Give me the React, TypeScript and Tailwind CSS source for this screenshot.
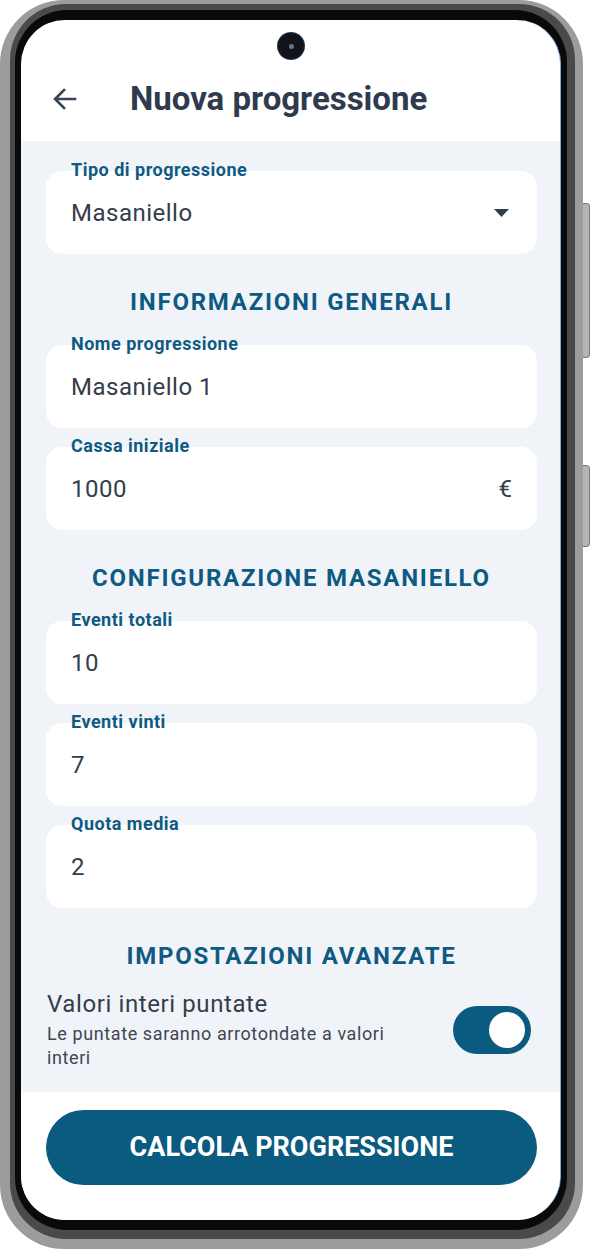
import React from 'react';

const blue = 'text-[#0e5a82]';

type FieldProps = {
  label: string;
  value: string;
  suffix?: React.ReactNode;
};

const Field: React.FC<FieldProps> = ({ label, value, suffix }) => (
  <div className="flex flex-col">
    <span className={`relative z-10 -mb-[8px] block pl-[25px] text-[18px] font-bold leading-[18px] tracking-[0.5px] ${blue}`}>
      {label}
    </span>
    <div className="flex h-[83px] items-center justify-between rounded-[16px] bg-white px-[25px]">
      <span className="text-[24px] leading-[28px] tracking-[0.5px] text-[#343d4b]">{value}</span>
      {suffix}
    </div>
  </div>
);

const SectionTitle: React.FC<{ children: React.ReactNode }> = ({ children }) => (
  <h2 className={`mt-[34px] mb-[19px] text-center text-[24px] font-bold leading-[28px] tracking-[1.75px] ${blue}`}>
    {children}
  </h2>
);

const DropArrow = () => (
  <svg width="15" height="8" viewBox="0 0 15 8" className="mr-[3px]">
    <path d="M0 0h15L7.5 8z" fill="#343d4b" />
  </svg>
);

export default function App() {
  return (
    <div className="flex h-[1250px] w-[590px] bg-white font-['Roboto',sans-serif]">
      {/* phone body */}
      <div className="h-[1249px] w-[583px] rounded-[64px] bg-[#9c9c9c] pt-[4px] pl-[10px] pr-[8px] pb-[10px]">
        <div className="h-full rounded-[56px] bg-[#4a4a4a] pt-[6px] pl-[5px] pr-[8px] pb-[9px]">
          <div className="h-full rounded-[52px] bg-[#0a0a0a] pt-[10px] pl-[6px] pr-[6px] pb-[10px]">
            {/* screen */}
            <div className="relative flex h-[1200px] w-[540px] flex-col overflow-hidden rounded-[44px] border-r-[1.5px] border-[#7ea9e4] bg-white">
              {/* camera */}
              <div className="absolute left-[257px] top-[13px] flex h-[26px] w-[26px] items-center justify-center rounded-full bg-[#111318] ring-1 ring-[#24365a]">
                <div className="h-[5px] w-[5px] rounded-full bg-[#5c7a8c]" />
              </div>

              {/* header */}
              <header className="flex h-[121px] shrink-0 items-center pt-[36px] pl-[27px]">
                <svg width="34" height="34" viewBox="0 0 24 24" className="shrink-0">
                  <path d="M20 12H5.5M12 5l-7 7 7 7" fill="none" stroke="#3a4458" strokeWidth="1.9" />
                </svg>
                <h1 className="ml-[48px] text-[33px] font-bold leading-[38px] text-[#2f3a4d]">Nuova progressione</h1>
              </header>

              {/* form */}
              <main className="flex h-[951px] shrink-0 flex-col bg-[#f0f4f8] pt-[20px] pl-[25px] pr-[23px]">
                <Field label="Tipo di progressione" value="Masaniello" suffix={<DropArrow />} />

                <SectionTitle>INFORMAZIONI GENERALI</SectionTitle>
                <div className="flex flex-col gap-[9px]">
                  <Field label="Nome progressione" value="Masaniello 1" />
                  <Field
                    label="Cassa iniziale"
                    value="1000"
                    suffix={<span className="text-[24px] leading-[28px] text-[#343d4b]">€</span>}
                  />
                </div>

                <SectionTitle>CONFIGURAZIONE MASANIELLO</SectionTitle>
                <div className="flex flex-col gap-[9px]">
                  <Field label="Eventi totali" value="10" />
                  <Field label="Eventi vinti" value="7" />
                  <Field label="Quota media" value="2" />
                </div>

                <SectionTitle>IMPOSTAZIONI AVANZATE</SectionTitle>
                <div className="flex items-center justify-between pl-[1px] pr-[6px]">
                  <div className="flex w-[370px] flex-col gap-[3px]">
                    <span className="text-[24px] leading-[30px] tracking-[0.6px] text-[#343d4b]">Valori interi puntate</span>
                    <span className="text-[18px] leading-[24px] tracking-[0.6px] text-[#3d4653]">
                      Le puntate saranno arrotondate a valori interi
                    </span>
                  </div>
                  <div className="flex h-[48px] w-[78px] items-center justify-end rounded-full bg-[#0b5a80] pr-[6px]">
                    <div className="h-[36px] w-[36px] rounded-full bg-white" />
                  </div>
                </div>
              </main>

              {/* footer */}
              <footer className="flex flex-1 flex-col bg-white pt-[18px] pl-[25px] pr-[23px]">
                <button className="flex h-[75px] items-center justify-center rounded-full bg-[#0b5a80] text-[27px] font-bold text-white">
                  CALCOLA PROGRESSIONE
                </button>
              </footer>
            </div>
          </div>
        </div>
      </div>

      {/* side buttons */}
      <div className="flex w-[7px] flex-col pt-[203px]">
        <div className="h-[155px] rounded-r-[4px] border border-l-0 border-[#7a7a7a] bg-[#b4b4b4]" />
        <div className="mt-[107px] h-[82px] rounded-r-[4px] border border-l-0 border-[#7a7a7a] bg-[#b4b4b4]" />
      </div>
    </div>
  );
}
